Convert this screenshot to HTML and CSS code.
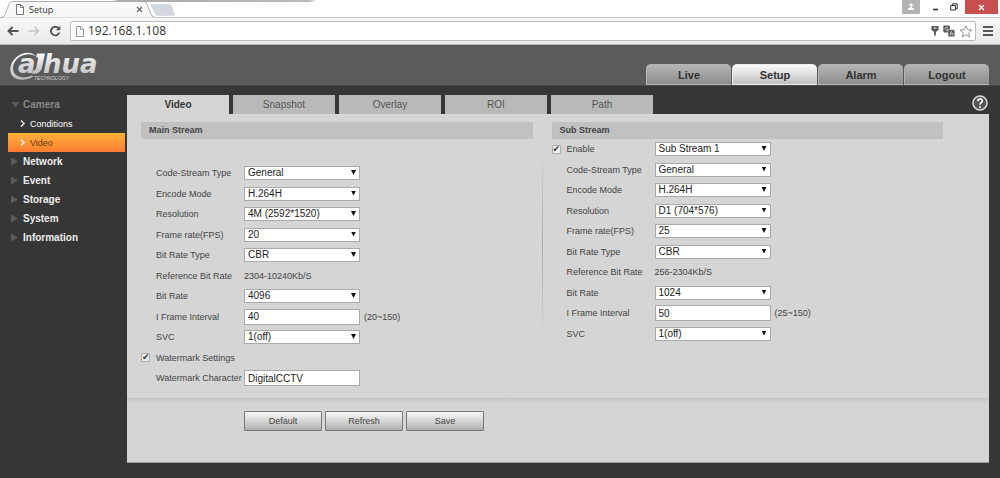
FILE: index.html
```html
<!DOCTYPE html>
<html lang="en">
<head>
<meta charset="utf-8">
<title>Setup</title>
<link rel="stylesheet" href="styles.css">
</head>
<body>
<div class="browser">
  <div class="titlebar">
    <svg class="tab-shape" width="180" height="18" viewBox="0 0 180 18">
      <path d="M0 17.5H1C4 17.500 5 15 6 12L9 4Q10 1.500 13 1.500H143Q146 1.500 147 4L150 12Q152 17.500 155 17.500" fill="#f8f8f8" stroke="#b0b0b0"/>
      <path d="M152 4.500H169Q171 4.500 172 7L174 13Q175 15.500 173 15.500H158Q156 15.500 155 13L151 6Q151 4.500 152 4.500Z" fill="#d3d7de" stroke="#c8ccd2" stroke-width=".5"/>
    </svg>
    <div class="tab-title">
      <svg width="8" height="11" viewBox="0 0 8 11"><path d="M.5.5H5L7.500 3V10.500H.5ZM4.500.5V3.500H7.500" fill="#fff" stroke="#777"/></svg>
      <span>Setup</span>
      <button class="plain" aria-label="Close tab"><svg width="7" height="7" viewBox="0 0 7 7"><path d="M1 1L6 6M6 1L1 6" stroke="#666" stroke-width="1.200"/></svg></button>
    </div>
    <div class="window-controls">
      <button class="plain user" aria-label="User"><svg width="8" height="8" viewBox="0 0 8 8"><circle cx="4" cy="2" r="1.700" fill="#fff"/><path d="M1 7V5H3V4H5V5H7V7Z" fill="#fff"/></svg></button>
      <button class="plain min" aria-label="Minimize"><svg width="7" height="8" viewBox="0 0 7 8"><path d="M1 6.500H6" stroke="#333" stroke-width="1.600"/></svg></button>
      <button class="plain max" aria-label="Restore"><svg width="8" height="8" viewBox="0 0 8 8"><path d="M.7 2.500H5.500V7H.7ZM2.500 2.500V.8H7.200V5.500H5.500" fill="none" stroke="#333"/></svg></button>
      <button class="plain close" aria-label="Close"><svg width="7" height="7" viewBox="0 0 7 7"><path d="M1 1L6 6M6 1L1 6" stroke="#fff" stroke-width="1.300"/></svg></button>
    </div>
  </div>
  <div class="toolbar">
    <button class="plain" aria-label="Back"><svg width="12" height="10" viewBox="0 0 12 10"><path d="M5.500 1L1.500 5L5.500 9M1.500 5H11.500" fill="none" stroke="#555" stroke-width="2"/></svg></button>
    <button class="plain" aria-label="Forward"><svg width="12" height="10" viewBox="0 0 12 10"><path d="M6.500 1L10.500 5L6.500 9M10.500 5H.5" fill="none" stroke="#c4c4c4" stroke-width="1.600"/></svg></button>
    <button class="plain" aria-label="Reload"><svg width="12" height="12" viewBox="0 0 12 12"><path d="M9.500 3.200A4.300 4.300 0 1 0 10.300 7.500" fill="none" stroke="#555" stroke-width="1.900"/><path d="M11.300.8V5.300H6.800Z" fill="#555"/></svg></button>
    <div class="address">
      <svg width="8" height="11" viewBox="0 0 8 11"><path d="M.5.5H5L7.500 3V10.500H.5ZM4.500.5V3.500H7.500" fill="#fff" stroke="#999"/></svg>
      <input class="url" type="text" aria-label="Address" value="192.168.1.108">
      <svg width="8" height="12" viewBox="0 0 8 12"><path d="M.5 1H7.500V5L5.500 6.500H4.900V10L4 11L3.100 10V6.500H2.500L.5 5Z" fill="#555"/><path d="M2.500 3H5.500" stroke="#fff"/></svg>
      <svg width="12" height="12" viewBox="0 0 12 12"><rect x=".3" y=".5" width="6.500" height="7" rx="1" fill="#555"/><rect x="5" y="4.700" width="6.700" height="7" rx="1" fill="#555" stroke="#eee" stroke-width=".5"/><path d="M5 2.500A1.700 1.700 0 1 0 5 5V4H3.800" fill="none" stroke="#ddd" stroke-width=".8"/><path d="M6.700 10.500L8.400 6.300L10.100 10.500M7.300 9H9.500" fill="none" stroke="#ddd" stroke-width=".8"/></svg>
      <svg width="14" height="13" viewBox="0 0 14 13"><path d="M7 .9L8.700 4.700L13 5L9.700 7.800L10.800 12L7 9.700L3.200 12L4.300 7.800L1 5L5.300 4.700Z" fill="#fff" stroke="#888" stroke-width=".9"/></svg>
    </div>
    <button class="plain menu" aria-label="Menu"><svg width="10" height="10" viewBox="0 0 10 10"><path d="M0 1H10M0 5H10M0 9H10" stroke="#555" stroke-width="2"/></svg></button>
  </div>
</div>

<header class="header">
  <svg class="logo" width="94" height="30" viewBox="0 0 94 30" role="img" aria-label="alhua Technology">
    <defs><linearGradient id="silver" x1="0" y1="0" x2="0" y2="1"><stop offset="0" stop-color="#fff"/><stop offset="1" stop-color="#bbb"/></linearGradient></defs>
    <path d="M27 5.500C23 0 13 1 7 6.500C-1 13.500-.5 25 8 28C13 29.800 19 28.500 24 25.500L23.500 24.500C16 27.500 9.500 27 6 23C2 18 4.500 10 10.500 6C16 2.500 23 2.500 27 5.500Z" fill="url(#silver)"/>
    <text class="logo-name" x="9" y="22" fill="url(#silver)">a</text>
    <path d="M28 2.500H36L33 16.500C31.800 21.500 28 23.500 23 22.500L24 19.500C26.500 19.300 27 18 27.500 15.500L29.300 6.500H27Z" fill="url(#silver)"/>
    <text class="logo-name" x="34" y="22" fill="url(#silver)">hua</text>
    <text class="logo-sub" x="25" y="29">TECHNOLOGY</text>
  </svg>
  <nav class="main-nav">
    <button>Live</button>
    <button class="active">Setup</button>
    <button>Alarm</button>
    <button>Logout</button>
  </nav>
</header>

<div class="body">
  <nav class="sidebar">
    <a class="group open" href="#">Camera</a>
    <a class="item" href="#"><svg width="5" height="7" viewBox="0 0 5 7"><path d="M1 .5L4 3.500L1 6.500" fill="none" stroke="#fff" stroke-width="1.400"/></svg>Conditions</a>
    <a class="item current" href="#"><svg width="5" height="7" viewBox="0 0 5 7"><path d="M1 .5L4 3.500L1 6.500" fill="none" stroke="#fff" stroke-width="1.400"/></svg>Video</a>
    <a class="group" href="#">Network</a>
    <a class="group" href="#">Event</a>
    <a class="group" href="#">Storage</a>
    <a class="group" href="#">System</a>
    <a class="group" href="#">Information</a>
  </nav>
  <main class="content">
    <div class="tabs">
      <button class="active">Video</button>
      <button>Snapshot</button>
      <button>Overlay</button>
      <button>ROI</button>
      <button>Path</button>
      <a class="help" href="#" aria-label="Help"><svg width="16" height="16" viewBox="0 0 16 16"><circle cx="8" cy="8" r="7" fill="#555" stroke="#ddd" stroke-width="1.500"/><path d="M5.700 6.300C5.700 3.200 10.400 3.300 10.300 6C10.200 7.700 8 7.700 8 9.700" fill="none" stroke="#fff" stroke-width="1.700"/><circle cx="8" cy="12" r="1" fill="#fff"/></svg></a>
    </div>
    <form class="panel">
      <div class="streams">
        <section class="stream main">
          <h2>Main Stream</h2>
          <div class="rows">
            <div class="row"><label for="m1">Code-Stream Type</label><span class="select"><select id="m1"><option>General</option></select></span></div>
            <div class="row"><label for="m2">Encode Mode</label><span class="select"><select id="m2"><option>H.264H</option></select></span></div>
            <div class="row"><label for="m3">Resolution</label><span class="select"><select id="m3"><option>4M (2592*1520)</option></select></span></div>
            <div class="row"><label for="m4">Frame rate(FPS)</label><span class="select"><select id="m4"><option>20</option></select></span></div>
            <div class="row"><label for="m5">Bit Rate Type</label><span class="select"><select id="m5"><option>CBR</option></select></span></div>
            <div class="row"><span class="name">Reference Bit Rate</span><span>2304-10240Kb/S</span></div>
            <div class="row"><label for="m6">Bit Rate</label><span class="select"><select id="m6"><option>4096</option></select></span></div>
            <div class="row"><label for="m7">I Frame Interval</label><input class="text" id="m7" type="text" value="40"><span>(20~150)</span></div>
            <div class="row"><label for="m8">SVC</label><span class="select"><select id="m8"><option>1(off)</option></select></span></div>
            <div class="row"><input class="check" id="m9" type="checkbox" checked><label for="m9">Watermark Settings</label></div>
            <div class="row"><label for="m10">Watermark Character</label><input class="text" id="m10" type="text" value="DigitalCCTV"></div>
          </div>
        </section>
        <section class="stream sub">
          <h2>Sub Stream</h2>
          <div class="rows">
            <div class="row"><input class="check" id="s0" type="checkbox" checked><label for="s0">Enable</label><span class="select"><select aria-label="Sub stream"><option>Sub Stream 1</option></select></span></div>
            <div class="row"><label for="s1">Code-Stream Type</label><span class="select"><select id="s1"><option>General</option></select></span></div>
            <div class="row"><label for="s2">Encode Mode</label><span class="select"><select id="s2"><option>H.264H</option></select></span></div>
            <div class="row"><label for="s3">Resolution</label><span class="select"><select id="s3"><option>D1 (704*576)</option></select></span></div>
            <div class="row"><label for="s4">Frame rate(FPS)</label><span class="select"><select id="s4"><option>25</option></select></span></div>
            <div class="row"><label for="s5">Bit Rate Type</label><span class="select"><select id="s5"><option>CBR</option></select></span></div>
            <div class="row"><span class="name">Reference Bit Rate</span><span>256-2304Kb/S</span></div>
            <div class="row"><label for="s6">Bit Rate</label><span class="select"><select id="s6"><option>1024</option></select></span></div>
            <div class="row"><label for="s7">I Frame Interval</label><input class="text" id="s7" type="text" value="50"><span>(25~150)</span></div>
            <div class="row"><label for="s8">SVC</label><span class="select"><select id="s8"><option>1(off)</option></select></span></div>
          </div>
        </section>
      </div>
      <div class="actions">
        <button type="button">Default</button>
        <button type="button">Refresh</button>
        <button type="button">Save</button>
      </div>
    </form>
  </main>
</div>
</body>
</html>
```
FILE: styles.css
```css
* { box-sizing: border-box; }
body {
  margin: 0;
  min-height: 100vh;
  background: #363636;
  color: #444;
  font: 9px/12px "Liberation Sans", Arial, sans-serif;
}
button, input, select { font: inherit; color: inherit; margin: 0; }
button { padding: 0; cursor: pointer; }
a { color: inherit; text-decoration: none; }
svg { display: block; flex: none; }
.plain {
  display: flex;
  align-items: center;
  justify-content: center;
  border: 0;
  background: none;
}

/* Browser frame */
.browser { background: #fff; }
.titlebar {
  position: relative;
  display: flex;
  justify-content: space-between;
  height: 18px;
  background: linear-gradient(90deg, #fff0, #aaa 6px, #bbb 198px, #fff0) 112px 0 / 204px 2px no-repeat, #fff;
  border-bottom: 1px solid #c4c4c4;
}
.tab-shape { position: absolute; left: 0; top: 0; }
.tab-title {
  position: relative;
  display: flex;
  align-items: center;
  gap: 5px;
  width: 143px;
  padding: 2px 0 0 16px;
  color: #333;
  font: 9px/12px "Open Sans", "Noto Sans", sans-serif;
}
.tab-title .plain { margin-left: auto; }
.window-controls { display: flex; align-items: flex-start; padding-right: 2px; }
.window-controls .plain { height: 14px; }
.window-controls .user { width: 18px; background: #b3b3b3; margin-right: 10px; }
.window-controls .min { width: 10px; margin-right: 9px; }
.window-controls .max { width: 10px; margin-right: 6px; }
.window-controls .close { width: 33px; background: #c94f4f; }
.toolbar {
  display: flex;
  align-items: center;
  gap: 9px;
  height: 27px;
  padding: 0 7px;
  background: linear-gradient(#f8f8f8, #e9e9e9);
  border-bottom: 1px solid #bbb;
}
.address {
  display: flex;
  align-items: center;
  gap: 4px;
  flex: 1;
  height: 20px;
  padding: 0 2px 0 5px;
  border: 1px solid #bbb;
  border-radius: 2px;
  background: #fff;
}
.url {
  flex: 1;
  min-width: 0;
  padding: 0 0 1px;
  border: 0;
  outline: 0;
  background: none;
  color: #333;
  font: 12px/16px "Open Sans", "Noto Sans", sans-serif;
}
.toolbar .menu { margin: 0 0 0 -2px; }

/* Header */
.header {
  display: flex;
  justify-content: space-between;
  align-items: flex-end;
  height: 41px;
  padding: 0 11px 0 9px;
  background: #5b5b5b;
  border-bottom: 1px solid #484848;
}
.logo { margin-bottom: 4px; }
.logo-name { font: italic bold 26px "DejaVu Sans", sans-serif; }
.logo-sub { font: italic 5px "Liberation Sans", Arial, sans-serif; fill: #ccc; }
.main-nav { display: flex; gap: 1px; }
.main-nav button {
  width: 85px;
  height: 21px;
  border: 1px solid #b5b5b5;
  border-width: 1px 0 1px 1px;
  border-radius: 5px 5px 0 0;
  background: linear-gradient(#b4b4b4, #8d8d8d);
  color: #333;
  font-size: 11px;
  font-weight: bold;
}
.main-nav .active { background: linear-gradient(#fafafa, #c0c0c0); border-color: #eee; }

/* Page */
.body { display: flex; padding: 9px 11px 15px 8px; }
.sidebar { width: 119px; padding-right: 2px; }
.sidebar a { display: flex; align-items: center; height: 19px; }
.sidebar .group { gap: 5px; color: #eee; font-size: 10px; font-weight: bold; padding-left: 3px; }
.group::before {
  content: "";
  width: 7px;
  height: 8px;
  background: #5b5b5b;
  clip-path: polygon(0 0, 100% 50%, 0 100%);
}
.sidebar .group.open { gap: 3px; color: #888; }
.group.open::before {
  width: 9px;
  height: 6px;
  clip-path: polygon(0 0, 100% 0, 50% 100%);
}
.item { gap: 5px; padding-left: 12px; color: #fff; }
.item.current { background: linear-gradient(#ffb23a, #fb7c33); color: #6b3c12; }
.content { flex: 1; min-width: 0; }
.tabs { display: flex; gap: 4px; height: 19px; }
.tabs button {
  width: 102px;
  border: 0;
  background: #b9b9b9;
  color: #555;
  font-size: 10px;
}
.tabs .active { background: #d5d5d5; color: #333; font-weight: bold; }
.help { margin-left: auto; margin-right: 1px; }
.panel { background: #d5d5d5; border-bottom: 1px solid #999; }
.streams {
  display: grid;
  grid-template-columns: 1fr 1fr;
  gap: 19px;
  padding: 8px 46px 10px 14px;
  border-bottom: 1px solid #c3c3c3;
}
.stream h2 {
  margin: 0;
  padding: 0 8px;
  background: #c1c1c1;
  color: #444;
  font-size: 9px;
  line-height: 17px;
}
.rows { display: grid; grid-auto-rows: 20px 21px; }
.main .rows { padding-top: 24px; }
.sub { position: relative; }
.sub::before {
  content: "";
  position: absolute;
  left: -10px;
  top: 26px;
  width: 1px;
  height: 194px;
  background: linear-gradient(#d5d5d5, #aaa, #d5d5d5);
}
.row {
  display: grid;
  grid-template-columns: 15px 88px 116px 1fr;
  align-items: center;
  white-space: nowrap;
}
.row label, .row .name { grid-column: 2; }
.select { position: relative; display: block; }
.select::after {
  content: "";
  position: absolute;
  right: 4px;
  top: 4px;
  width: 5px;
  height: 5px;
  background: #111;
  clip-path: polygon(0 0, 100% 0, 50% 100%);
  pointer-events: none;
}
.select select {
  display: block;
  appearance: none;
  width: 100%;
  height: 14px;
  padding: 0 3px;
  border: 1px solid #aaa;
  border-radius: 0;
  background: #fff;
  color: #222;
  font-size: 10px;
  line-height: 12px;
}
.text {
  width: 100%;
  height: 16px;
  padding: 0 3px;
  border: 1px solid #aaa;
  background: #fff;
  color: #222;
  font-size: 10px;
}
.text + span { padding-left: 4px; }
.check {
  appearance: none;
  grid-column: 1;
  width: 9px;
  height: 9px;
  border: 1px solid #aaa;
  border-radius: 1px;
  background: #eee;
}
.check:checked::before {
  content: "✔";
  display: block;
  color: #333;
  font: 9px/7px "DejaVu Sans", sans-serif;
}
.actions {
  display: flex;
  gap: 3px;
  padding: 12px 14px 31px 117px;
  background: linear-gradient(#cacaca, #d5d5d5 4px);
}
.actions button {
  width: 78px;
  height: 20px;
  border: 1px solid #777;
  border-radius: 1px;
  background: linear-gradient(#fafafa, #b0b0b0);
  color: #444;
}
```
